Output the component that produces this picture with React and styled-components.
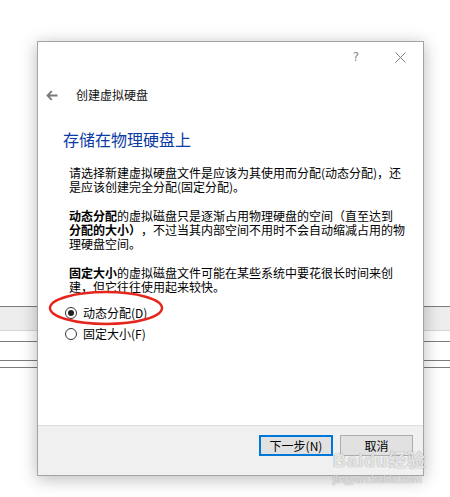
import React from 'react';
import styled, { createGlobalStyle } from 'styled-components';

const GlobalStyle = createGlobalStyle`
  html, body {
    margin: 0;
    padding: 0;
    background: #fff;
  }
  body {
    font-family: "Noto Sans CJK SC", "Noto Sans", sans-serif;
    color: #000;
  }
`;

const Page = styled.div`
  position: relative;
  width: 450px;
  height: 497px;
  overflow: hidden;
  background: #fff;
`;

const Backdrop = styled.div`
  display: flex;
  flex-direction: column;
  padding-top: 306px;
`;

const Rule = styled.div`
  height: 1px;
  margin-top: ${p => p.$gap || 0}px;
  background: #7c7c7c;
`;

const Band = styled.div`
  height: 23px;
  background: #ededed;
  border-bottom: 1px solid #d6d6d6;
`;

const Dialog = styled.div`
  position: absolute;
  left: 37px;
  top: 41px;
  width: 387px;
  height: 435px;
  box-sizing: border-box;
  border: 1px solid #a4a4a4;
  background: #fff;
  box-shadow: 0 3px 16px rgba(0, 0, 0, 0.28);
  display: flex;
  flex-direction: column;
`;

const TitleBar = styled.div`
  height: 30px;
  display: flex;
  justify-content: flex-end;
  align-items: center;
  padding-right: 17px;
  gap: 35px;
`;

const Help = styled.span`
  width: 8px;
  text-align: center;
  font-family: "DejaVu Sans", sans-serif;
  font-size: 12px;
  line-height: 14px;
  color: #8a8a8a;
`;

const Header = styled.div`
  margin-top: 13px;
  height: 20px;
  display: flex;
  align-items: center;
  padding-left: 8px;
  gap: 18px;
`;

const HeaderTitle = styled.span`
  font-size: 12px;
  line-height: 20px;
  color: #111;
`;

const Heading = styled.h1`
  margin: 23px 0 0 25px;
  font-size: 16px;
  font-weight: 400;
  line-height: 22px;
  color: #0a3aa6;
`;

const Body = styled.div`
  margin-top: 16px;
  padding-left: 31px;
`;

const Para = styled.p`
  margin: 0 0 15px 0;
  font-size: 12px;
  line-height: 14px;
  white-space: nowrap;
`;

const Strong = styled.b`
  display: inline-block;
  font-weight: 700;
  line-height: 14px;
  vertical-align: top;
`;

const RadioGroup = styled.div`
  margin-top: -7px;
  padding-left: 27px;
  display: flex;
  flex-direction: column;
`;

const RadioRow = styled.label`
  height: 21px;
  display: flex;
  align-items: center;
  gap: 6px;
  font-size: 12px;
  color: #000;
`;

const RadioCircle = styled.span`
  width: 12px;
  height: 12px;
  box-sizing: border-box;
  border-radius: 50%;
  border: 1px solid #333;
  background: #fff;
  display: flex;
  align-items: center;
  justify-content: center;

  &::after {
    content: '';
    width: 6px;
    height: 6px;
    border-radius: 50%;
    background: ${p => (p.$checked ? '#222' : 'transparent')};
  }
`;

const Footer = styled.div`
  margin-top: auto;
  height: 40px;
  border-top: 1px solid #dcdcdc;
  background: #f0f0f0;
  display: flex;
  justify-content: flex-end;
  align-items: flex-start;
  padding: 9px 10px 0 0;
  gap: 7px;
`;

const Button = styled.button`
  width: ${p => p.$w}px;
  height: 21px;
  box-sizing: border-box;
  padding: 0;
  background: #e1e1e1;
  border: ${p => (p.$primary ? '2px solid #0078d7' : '1px solid #adadad')};
  font-family: "Noto Sans CJK SC", sans-serif;
  font-size: 12px;
  line-height: 16px;
  color: #000;
`;

const Ellipse = styled.svg`
  position: absolute;
  left: 47px;
  top: 289px;
  pointer-events: none;
`;

const Watermark = styled.div`
  position: absolute;
  left: 333px;
  top: 451px;
  display: flex;
  flex-direction: column;
  align-items: flex-start;
  color: rgba(255, 255, 255, 0.75);
  text-shadow: 0 0 1px rgba(130, 130, 130, 0.6), 0 0 1px rgba(130, 130, 130, 0.6);
  pointer-events: none;
`;

const MarkTop = styled.span`
  font-family: "Liberation Sans", "Noto Sans CJK SC", sans-serif;
  font-size: 18px;
  font-weight: 700;
  line-height: 20px;
  letter-spacing: 1px;
`;

const MarkBottom = styled.span`
  font-family: "Liberation Sans", sans-serif;
  font-size: 11px;
  line-height: 13px;
  margin-top: 2px;
`;

const BackArrow = () => (
  <svg width="12" height="11" viewBox="0 0 12 11">
    <path d="M11.5 5.5H1.5M5.8 1.2L1.5 5.5l4.3 4.3" fill="none" stroke="#7a7a7a" strokeWidth="1.8" />
  </svg>
);

const CloseIcon = () => (
  <svg width="11" height="11" viewBox="0 0 11 11">
    <path d="M0.5 0.5l10 10M10.5 0.5l-10 10" fill="none" stroke="#7d7d7d" strokeWidth="1" />
  </svg>
);

export default function App() {
  return (
    <Page>
      <GlobalStyle />
      <Backdrop>
        <Rule />
        <Band />
        <Rule $gap={10} />
        <Rule $gap={18} />
        <Rule $gap={6} />
      </Backdrop>

      <Dialog>
        <TitleBar>
          <Help>?</Help>
          <CloseIcon />
        </TitleBar>
        <Header>
          <BackArrow />
          <HeaderTitle>创建虚拟硬盘</HeaderTitle>
        </Header>
        <Heading>存储在物理硬盘上</Heading>
        <Body>
          <Para>
            请选择新建虚拟硬盘文件是应该为其使用而分配(动态分配)，还
            <br />
            是应该创建完全分配(固定分配)。
          </Para>
          <Para>
            <Strong>动态分配</Strong>的虚拟磁盘只是逐渐占用物理硬盘的空间（直至达到
            <br />
            <Strong>分配的大小）</Strong>，不过当其内部空间不用时不会自动缩减占用的物
            <br />
            理硬盘空间。
          </Para>
          <Para>
            <Strong>固定大小</Strong>的虚拟磁盘文件可能在某些系统中要花很长时间来创
            <br />
            建，但它往往使用起来较快。
          </Para>
        </Body>
        <RadioGroup>
          <RadioRow>
            <RadioCircle $checked />
            动态分配(D)
          </RadioRow>
          <RadioRow>
            <RadioCircle />
            固定大小(F)
          </RadioRow>
        </RadioGroup>
        <Footer>
          <Button $primary $w={74}>下一步(N)</Button>
          <Button $w={73}>取消</Button>
        </Footer>
      </Dialog>

      <Ellipse width="118" height="38" viewBox="0 0 118 38">
        <ellipse cx="59" cy="19" rx="56" ry="16" fill="none" stroke="#e5261d" strokeWidth="2.5" />
      </Ellipse>

      <Watermark>
        <MarkTop>Baidu经验</MarkTop>
        <MarkBottom>jingyan.baidu.com</MarkBottom>
      </Watermark>
    </Page>
  );
}
